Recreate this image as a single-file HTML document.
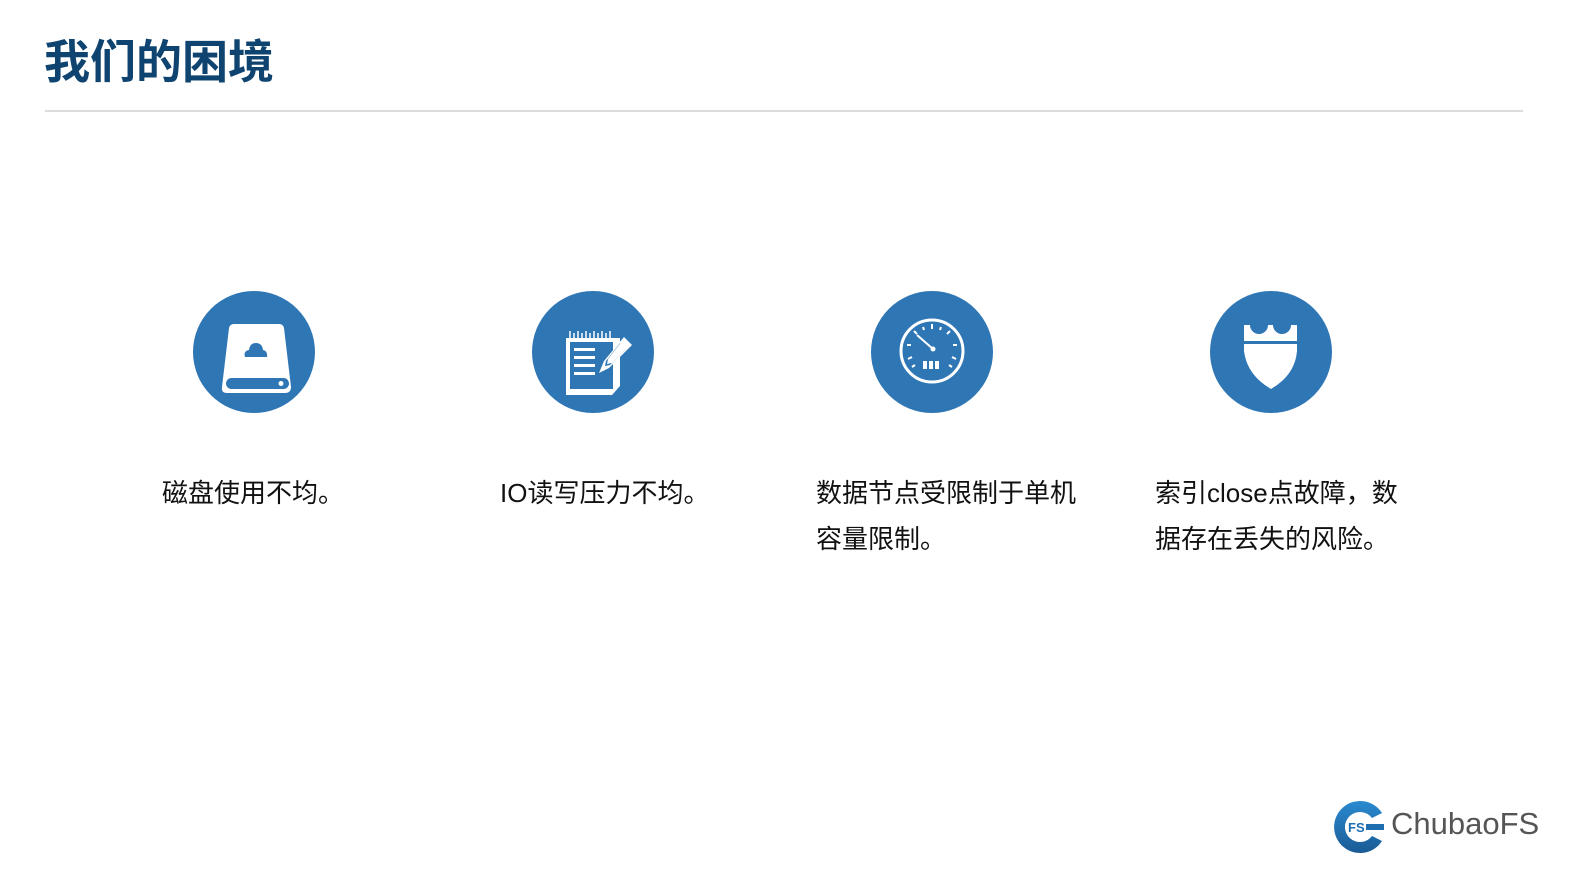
<!DOCTYPE html>
<html><head><meta charset="utf-8">
<style>
html,body{margin:0;padding:0;background:#fff;width:1587px;height:892px;overflow:hidden;position:relative;font-family:"Liberation Sans","Noto Sans CJK SC",sans-serif;}
.title{position:absolute;left:44px;top:33px;font-size:46px;font-weight:bold;color:#0f4470;letter-spacing:0px;line-height:58px;}
.rule{position:absolute;left:45px;top:110px;width:1478px;height:2px;background:#dcdcdc;}
.ic{position:absolute;top:291px;width:122px;height:122px;}
.txt{position:absolute;top:470px;font-size:26px;line-height:46px;color:#111;width:280px;}
.logo{position:absolute;left:1332px;top:799px;}
.lt{position:absolute;left:1391px;top:806px;font-size:31px;color:#555;}
</style></head><body>
<div class="title">我们的困境</div>
<div class="rule"></div>

<svg class="ic" style="left:193px" viewBox="0 0 122 122">
<circle cx="61" cy="61" r="61" fill="#2f76b5"/>
<path d="M41 33 H86 Q90 33 91 37 L98 96 Q98 102 92 102 H34 Q28 102 29 96 L36 37 Q37 33 41 33Z" fill="#fff"/>
<rect x="33" y="87" width="63" height="11" rx="5.5" fill="#2f76b5"/>
<circle cx="88" cy="92.5" r="2.5" fill="#fff"/>
<path d="M52 66 Q50 60 56 59 Q57 52 63 52 Q69 52 70 59 Q75 60 74 66Z" fill="#2f76b5"/>
</svg>

<svg class="ic" style="left:532px" viewBox="0 0 122 122">
<circle cx="61" cy="61" r="61" fill="#2f76b5"/>
<path d="M34 47 H88 V95 L80 104 H34Z" fill="#fff"/>
<rect x="38" y="51" width="43" height="47" fill="#2f76b5"/>
<g fill="#fff"><rect x="42" y="57" width="21" height="3"/><rect x="42" y="65" width="21" height="3"/><rect x="42" y="73" width="21" height="3"/><rect x="42" y="81" width="21" height="3"/></g>
<g stroke="#fff" stroke-width="1.5"><path d="M38 47V40M42 47V42M46 47V40M50 47V42M54 47V40M58 47V42M62 47V40M66 47V42M70 47V40M74 47V42M78 47V40"/></g>
<path d="M92 46 L100 54 L77 77 L67 82 L72 70Z" fill="#fff"/>
<path d="M88 52 L94 58 L78 74 L73 75 L74 70Z" fill="#2f76b5"/>
<path d="M90 50 L96 56 L80 72 L75 73 L76 68Z" fill="#fff"/>
</svg>

<svg class="ic" style="left:871px" viewBox="0 0 122 122">
<circle cx="61" cy="61" r="61" fill="#2f76b5"/>
<circle cx="61" cy="60" r="31" fill="none" stroke="#fff" stroke-width="3"/>
<g stroke="#fff" stroke-width="2">
<path d="M61 33v5M43 40l3 3M79 40l-3 3M36 54h4M82 54h4M37 68l4-2M85 68l-4-2M41 76l3-2M81 76l-3-2M52 36l1 3M70 36l-1 3M31 44l0 0"/>
</g>
<path d="M46 44 L62 58" stroke="#fff" stroke-width="2"/>
<circle cx="62" cy="58" r="2.5" fill="#fff"/>
<g fill="#fff"><rect x="52" y="70" width="4" height="8"/><rect x="58" y="70" width="4" height="8"/><rect x="64" y="70" width="4" height="8"/></g>
</svg>

<svg class="ic" style="left:1210px" viewBox="0 0 122 122">
<circle cx="61" cy="61" r="61" fill="#2f76b5"/>
<path d="M34 34 H40 A9 9 0 0 0 58 34 H63 A9 9 0 0 0 81 34 H87 V50 H34Z" fill="#fff"/>
<path d="M34 53 H87 V60 Q85 84 61 98 Q37 84 34 60Z" fill="#fff"/>
</svg>

<div class="txt" style="left:162px">磁盘使用不均。</div>
<div class="txt" style="left:500px">IO读写压力不均。</div>
<div class="txt" style="left:816px">数据节点受限制于单机容量限制。</div>
<div class="txt" style="left:1155px;width:262px">索引close点故障，数据存在丢失的风险。</div>

<svg class="logo" width="56" height="56" viewBox="0 0 56 56">
<defs><linearGradient id="g" x1="0" y1="0" x2="0" y2="1"><stop offset="0" stop-color="#2a8ad0"/><stop offset="1" stop-color="#1a5b95"/></linearGradient></defs>
<path d="M50 14 A26 26 0 1 0 50 42 L40 37 A15 15 0 1 1 40 19Z" fill="url(#g)"/>
<circle cx="26" cy="28" r="13" fill="#fff"/>
<rect x="34" y="25" width="18" height="6" fill="#1f6fb0"/>
<text x="16" y="33" font-family="Liberation Sans" font-weight="bold" font-size="13" fill="#1f6fb0">FS</text>
</svg>
<div class="lt">ChubaoFS</div>
</body></html>
